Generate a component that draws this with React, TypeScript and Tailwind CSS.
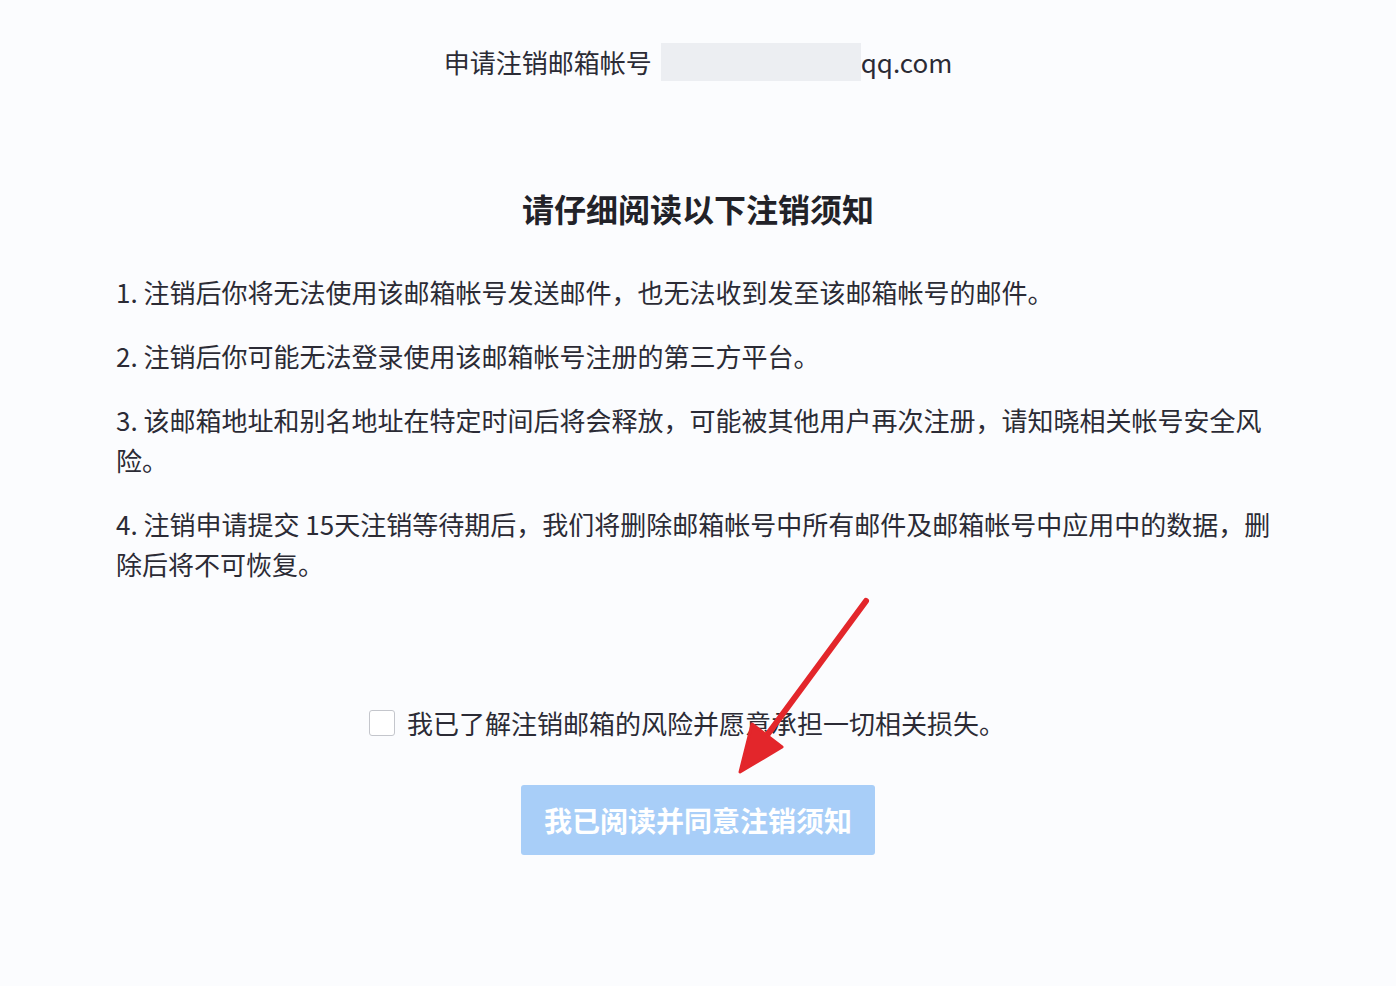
import React from "react"

const notices = [
  "1. 注销后你将无法使用该邮箱帐号发送邮件，也无法收到发至该邮箱帐号的邮件。",
  "2. 注销后你可能无法登录使用该邮箱帐号注册的第三方平台。",
  "3. 该邮箱地址和别名地址在特定时间后将会释放，可能被其他用户再次注册，请知晓相关帐号安全风险。",
  "4. 注销申请提交 15天注销等待期后，我们将删除邮箱帐号中所有邮件及邮箱帐号中应用中的数据，删除后将不可恢复。",
]

function Arrow() {
  // red annotation arrow drawn over the page
  return (
    <svg className="pointer-events-none absolute left-0 top-0" width="1396" height="986">
      <line x1="866" y1="601" x2="762" y2="742" stroke="#e3262b" strokeWidth="6" strokeLinecap="round" />
      <polygon points="740,772 752,724 782,747" fill="#e3262b" stroke="#e3262b" strokeWidth="3" strokeLinejoin="round" />
    </svg>
  )
}

export default function App() {
  return (
    <div
      className="relative min-h-[986px] w-full bg-[#fbfcfe] text-[#2b2b35]"
      style={{ fontFamily: '"Noto Sans CJK SC", "Noto Sans", sans-serif' }}
    >
      <div className="flex justify-center pt-[42px]">
        <div className="flex items-center text-[26px] leading-[40px]">
          <span>申请注销邮箱帐号</span>
          <span className="ml-[9px] inline-block h-[38px] w-[200px] bg-[#eceef2]" />
          <span>qq.com</span>
        </div>
      </div>

      <h1 className="mt-[102px] text-center text-[32px] font-bold leading-[48px] text-[#222228]">
        请仔细阅读以下注销须知
      </h1>

      <div className="mx-auto mt-[40px] flex w-[1164px] flex-col gap-[24px]">
        {notices.map((n) => (
          <p key={n} className="text-[26px] leading-[40px]">
            {n}
          </p>
        ))}
      </div>

      <div className="mt-[119px] flex items-center justify-center pr-[22px]">
        <span className="inline-block h-[26px] w-[26px] rounded-[3px] border border-[#c4c6cc] bg-white" />
        <span className="ml-[12px] text-[26px] leading-[40px]">我已了解注销邮箱的风险并愿意承担一切相关损失。</span>
      </div>

      <div className="mt-[42px] flex justify-center">
        <button className="h-[70px] w-[354px] rounded-[3px] bg-[#a8cef8] text-[28px] font-bold text-white">
          我已阅读并同意注销须知
        </button>
      </div>

      <Arrow />
    </div>
  )
}
